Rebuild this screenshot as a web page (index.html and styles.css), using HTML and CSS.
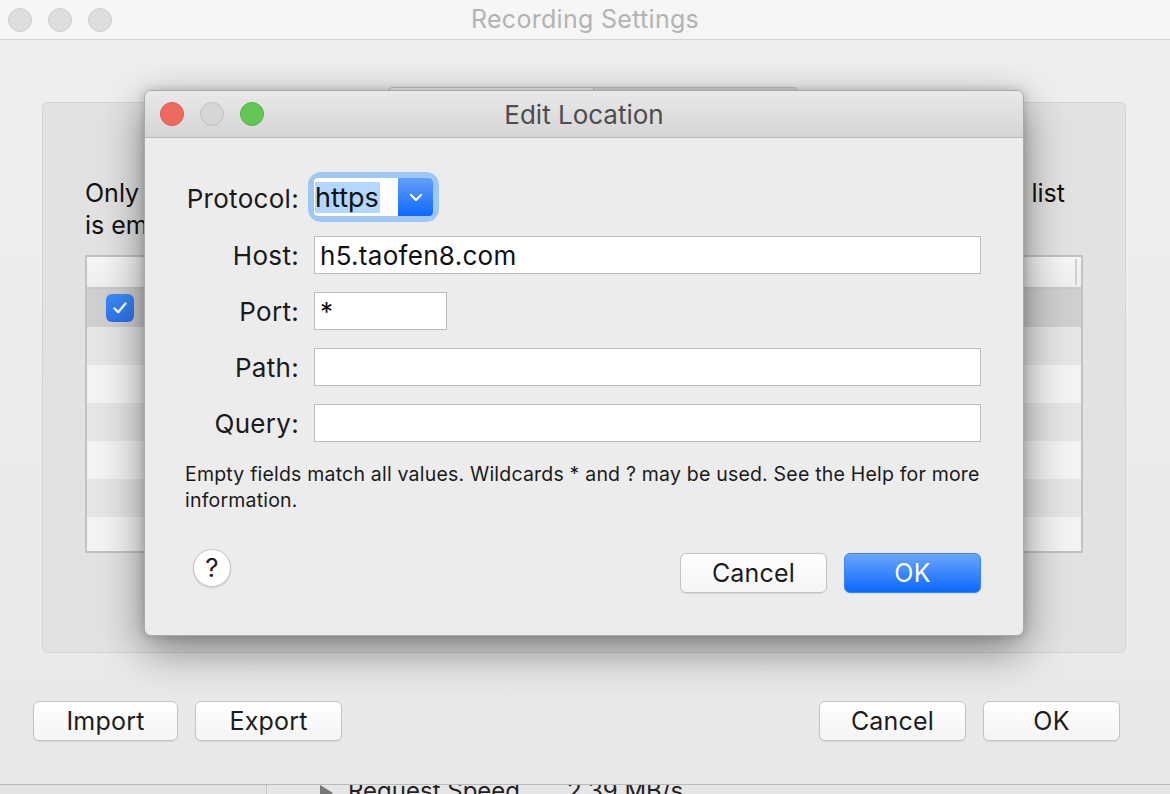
FILE: index.html
```html
<!DOCTYPE html>
<html>
<head>
<meta charset="utf-8">
<link rel="stylesheet" href="styles.css">
</head>
<body>
<div class="win">
  <div class="titlebar">
    <div class="lights">
      <span class="light grey"></span><span class="light grey"></span><span class="light grey"></span>
    </div>
    <div class="win-title">Recording Settings</div>
  </div>
  <div class="content">
    <div class="segmented">
      <span class="seg"></span><span class="seg on"></span>
    </div>
    <div class="panel">
      <p class="intro"><span class="l1">Only requests to the locations in the list below will be recorded. If the list</span><span class="l2">is empty then all requests will be recorded.</span></p>
      <div class="table">
        <div class="thead"><span class="hdiv"></span></div>
        <div class="row sel"><span class="cb"><svg width="16" height="14" viewBox="0 0 16 14"><path d="M2.5 7.5 L6.2 11.2 L13.5 2.5" fill="none" stroke="#fff" stroke-width="2.4" stroke-linecap="round" stroke-linejoin="round"/></svg></span></div>
        <div class="row"></div>
        <div class="row"></div>
        <div class="row"></div>
        <div class="row"></div>
        <div class="row"></div>
        <div class="row"></div>
      </div>
    </div>
    <div class="actions">
      <div class="group"><button class="btn w145">Import</button><button class="btn w147">Export</button></div>
      <div class="group"><button class="btn w147">Cancel</button><button class="btn w137">OK</button></div>
    </div>
  </div>
</div>
<div class="strip">
  <div class="strip-side"></div>
  <div class="strip-main"><span class="tri"></span><span class="sk">Request Speed</span><span class="sv">2.39 MB/s</span></div>
</div>

<div class="dialog">
  <div class="d-titlebar">
    <div class="lights">
      <span class="light red"></span><span class="light grey2"></span><span class="light green"></span>
    </div>
    <div class="d-title">Edit Location</div>
  </div>
  <div class="d-body">
    <div class="form">
      <label class="lbl">Protocol:</label>
      <div class="popup-ring">
        <div class="popup"><span class="pv"><span class="hl">https</span></span><span class="pbtn"><svg width="14" height="9" viewBox="0 0 14 9"><path d="M2 2 L7 7 L12 2" fill="none" stroke="#fff" stroke-width="2.2" stroke-linecap="round" stroke-linejoin="round"/></svg></span></div>
      </div>
      <label class="lbl">Host:</label>
      <div class="field wide">h5.taofen8.com</div>
      <label class="lbl">Port:</label>
      <div class="field narrow">*</div>
      <label class="lbl">Path:</label>
      <div class="field wide"></div>
      <label class="lbl">Query:</label>
      <div class="field wide"></div>
    </div>
    <p class="help">Empty fields match all values. Wildcards * and ? may be used. See the Help for more information.</p>
    <div class="d-actions">
      <span class="helpbtn">?</span>
      <div class="group"><button class="btn w147">Cancel</button><button class="btn primary w137">OK</button></div>
    </div>
  </div>
</div>
</body>
</html>
```
FILE: styles.css
```css
* { box-sizing: border-box; }
html, body { margin: 0; padding: 0; }
body {
  width: 1170px;
  height: 794px;
  overflow: hidden;
  background: #dcdcdc;
  font-family: "Inter", "Noto Sans", sans-serif;
  color: #1d1d1d;
  position: relative;
}

/* background window */
.win {
  height: 785px;
  background: #ececec;
  border-bottom: 1px solid #b9b9b9;
  display: flex;
  flex-direction: column;
}
.titlebar {
  height: 40px;
  background: #f6f6f6;
  border-bottom: 1px solid #d2d2d2;
  display: grid;
  grid-template-columns: 1fr auto 1fr;
  align-items: center;
}
.lights { display: flex; gap: 16px; padding-left: 8px; }
.light {
  width: 24px; height: 24px; border-radius: 50%;
  display: block;
}
.light.grey { background: #dedede; border: 1px solid #cfcfcf; }
.win-title {
  font-size: 25px;
  letter-spacing: 0.3px;
  color: #b3b3b3;
  margin-top: -1px;
}
.content {
  flex: 1;
  padding: 47px 0 0 0;
  display: flex;
  flex-direction: column;
  background: linear-gradient(#efefef, #e8e8e8);
}
.segmented {
  align-self: center;
  display: flex;
  height: 30px;
  margin-bottom: -15px;
  margin-left: 16px;
  border: 1px solid #c4c4c4;
  border-radius: 6px;
  background: #f7f7f7;
  overflow: hidden;
  z-index: 1;
}
.seg { width: 205px; }
.seg.on { background: #dcdcdc; border-left: 1px solid #c4c4c4; }
.panel {
  margin-left: 42px;
  width: 1084px;
  height: 551px;
  background: #e2e2e2;
  border: 1px solid #d5d5d5;
  border-radius: 6px;
  padding: 74px 42px 0 42px;
}
.intro {
  margin: 0;
  font-size: 25px;
  line-height: 32px;
  color: #111;
}
.intro .l1 {
  display: block;
  width: 980px;
  height: 32px;
  overflow: hidden;
  text-align: justify;
  text-align-last: justify;
}
.intro .l2 { display: block; }
.table {
  margin-top: 14px;
  width: 998px;
  height: 298px;
  border: 2px solid #c2c2c2;
  background: #f3f3f3;
  display: flex;
  flex-direction: column;
}
.thead {
  height: 32px;
  flex: none;
  background: linear-gradient(#f6f6f6, #eeeeee);
  border-bottom: 2px solid #c9c9c9;
  display: flex;
  align-items: center;
  justify-content: flex-end;
  padding: 0 4px 0 0;
}
.hdiv { width: 2px; height: 26px; background: #d0d0d0; }
.row {
  height: 38px;
  flex: none;
  background: #f3f3f3;
  display: flex;
  align-items: center;
}
.row:nth-child(odd) { background: #e5e5e5; }
.row.sel { background: #cfcfcf; }
.row:last-child { height: 34px; }
.cb {
  margin-left: 19px;
  width: 28px; height: 28px;
  border-radius: 6px;
  background: linear-gradient(#3c8bf7, #2c73ea);
  display: flex;
  align-items: center;
  justify-content: center;
}

.actions {
  margin-top: 48px;
  display: flex;
  justify-content: space-between;
  padding: 0 50px 0 33px;
}
.group { display: flex; gap: 17px; }
.btn {
  height: 40px;
  border: 1px solid #c3c3c3;
  border-radius: 6px;
  background: linear-gradient(#ffffff, #f4f4f4);
  box-shadow: 0 1px 1px rgba(0,0,0,0.08);
  font-family: "Inter", "Noto Sans", sans-serif;
  font-size: 25px;
  letter-spacing: 0.2px;
  color: #1d1d1d;
  padding: 0;
}
.w145 { width: 145px; }
.w147 { width: 147px; }
.w137 { width: 137px; }

/* strip below window */
.strip {
  height: 9px;
  overflow: hidden;
  display: flex;
  background: #e6e6e6;
}
.strip-side {
  width: 267px;
  border-right: 1px solid #c7c7c7;
  background: #e3e3e3;
}
.strip-main {
  display: flex;
  align-items: flex-start;
  padding-left: 53px;
  margin-top: -8px;
  font-size: 24px;
  line-height: 28px;
  color: #222;
}
.tri {
  width: 0; height: 0;
  border-left: 13px solid #777;
  border-top: 8px solid transparent;
  border-bottom: 8px solid transparent;
  margin-top: 8px;
  margin-right: 15px;
}
.sv { margin-left: 47px; }

/* dialog */
.dialog {
  position: absolute;
  z-index: 10;
  left: 144px;
  top: 90px;
  width: 880px;
  height: 546px;
  background: #ececec;
  border: 1px solid #a9a9a9;
  border-radius: 7px;
  box-shadow: 0 14px 44px rgba(0,0,0,0.45), 0 0 10px rgba(0,0,0,0.18);
  overflow: hidden;
}
.d-titlebar {
  height: 47px;
  background: linear-gradient(#e9e9e9, #d5d5d5);
  border-bottom: 1px solid #bababa;
  display: grid;
  grid-template-columns: 1fr auto 1fr;
  align-items: center;
}
.d-titlebar .lights { padding-left: 15px; }
.light.red { background: #ee6a5f; border: 1px solid #dc5a4f; }
.light.grey2 { background: #d6d6d6; border: 1px solid #c1c1c1; }
.light.green { background: #62c655; border: 1px solid #53b246; }
.d-title {
  font-size: 26px;
  color: #4d4d4d;
}
.d-body {
  padding: 40px 42px 0 40px;
}
.form {
  display: grid;
  grid-template-columns: 114px auto;
  column-gap: 15px;
  row-gap: 18px;
  align-items: center;
  justify-items: start;
}
.lbl {
  justify-self: end;
  font-size: 26px;
  letter-spacing: 0.3px;
  color: #1a1a1a;
  white-space: nowrap;
}
.popup-ring {
  margin-bottom: 2px;
  border-radius: 7px;
  box-shadow: 0 0 0 6px #9fc7f3;
}
.popup {
  width: 119px;
  height: 38px;
  display: flex;
  border-radius: 4px;
  overflow: hidden;
  background: #fff;
}
.pv {
  flex: 1;
  display: flex;
  align-items: center;
  font-size: 27px;
  padding-left: 1px;
}
.hl {
  background: #b3d7ff;
  padding: 0 1px 0 0;
  line-height: 31px;
  color: #111;
}
.pbtn {
  width: 35px;
  flex: none;
  background: linear-gradient(#63a0fa, #0f68fb);
  display: flex;
  align-items: center;
  justify-content: center;
}
.field {
  height: 38px;
  background: #fff;
  border: 1px solid #bcbcbc;
  font-size: 26px;
  letter-spacing: 0.3px;
  line-height: 38px;
  padding-left: 5px;
  color: #111;
}
.field.wide { width: 667px; }
.field.narrow { width: 133px; }
.help {
  margin: 19px 0 0 0;
  font-size: 19.5px;
  letter-spacing: 0.2px;
  line-height: 26px;
  color: #1a1a1a;
  width: 800px;
}
.d-actions {
  margin-top: 40px;
  display: flex;
  justify-content: space-between;
  align-items: center;
  padding-left: 8px;
}
.helpbtn {
  width: 38px; height: 38px;
  border-radius: 50%;
  background: #fff;
  border: 1px solid #c8c8c8;
  box-shadow: 0 1px 2px rgba(0,0,0,0.15);
  display: flex;
  align-items: center;
  justify-content: center;
  font-size: 26px;
  color: #222;
  margin-top: -11px;
}
.btn.primary {
  background: linear-gradient(#6aa6fa, #0a68fd);
  border-color: #3b86f7;
  color: #fff;
}
```
